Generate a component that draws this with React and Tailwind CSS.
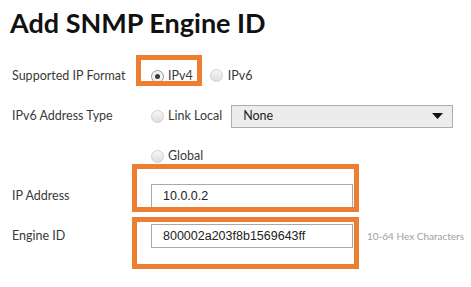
import React from 'react'

const ORANGE = 'border-[#ed7d31]'

function Radio({ checked }) {
  return (
    <span
      className={`relative inline-flex h-[13px] w-[13px] shrink-0 items-center justify-center rounded-full border ${
        checked ? 'border-[#9a9a9a] bg-[#f3f3f3]' : 'border-[#cfcfcf] bg-gradient-to-b from-[#f7f7f7] to-[#dedede]'
      }`}
    >
      {checked && <span className="h-[5px] w-[5px] rounded-full bg-[#3c3c3c]" />}
    </span>
  )
}

function Row({ label, children }) {
  return (
    <div className="flex h-10 items-center">
      <div className="w-[139px] shrink-0 text-[12.5px] text-[#3a3a3a]">{label}</div>
      <div className="flex items-center">{children}</div>
    </div>
  )
}

function TextInput({ value }) {
  return (
    <div className="flex h-6 w-[202px] items-center border border-[#a9a9a9] bg-white pl-[11px] text-[12.5px] text-[#222] font-['Liberation_Sans',Arial,sans-serif]">
      {value}
    </div>
  )
}

export default function App() {
  return (
    <div className="relative h-[287px] w-[471px] overflow-hidden bg-white font-['Lato','DejaVu_Sans',sans-serif]">
      <h1 className="pl-[10px] pt-[9px] text-[27px] font-bold leading-none text-[#111]">Add SNMP Engine ID</h1>

      <div className="mt-[20px] pl-[12px]">
        <Row label="Supported IP Format">
          <Radio checked />
          <span className="ml-1 text-[12.5px] text-[#3a3a3a]">IPv4</span>
          <span className="ml-[17px]"><Radio /></span>
          <span className="ml-[5px] text-[12.5px] text-[#3a3a3a]">IPv6</span>
        </Row>
        <Row label="IPv6 Address Type">
          <Radio />
          <span className="ml-1 text-[12.5px] text-[#3a3a3a]">Link Local</span>
          <div className="ml-[9px] flex h-[23px] w-[222px] items-center justify-between border border-[#adadad] bg-[#ececec] pl-[11px] pr-[9px] text-[12.5px] text-[#222]">
            <span>None</span>
            <svg width="11" height="6" viewBox="0 0 11 6">
              <path d="M0 0h11L5.5 6z" fill="#111" />
            </svg>
          </div>
        </Row>
        <Row label="">
          <Radio />
          <span className="ml-1 text-[12.5px] text-[#3a3a3a]">Global</span>
        </Row>
        <Row label="IP Address">
          <TextInput value="10.0.0.2" />
        </Row>
        <Row label="Engine ID">
          <TextInput value="800002a203f8b1569643ff" />
          <span className="ml-[14px] text-[10px] text-[#a0a0a0]">10-64 Hex Characters</span>
        </Row>
      </div>

      <div className={`pointer-events-none absolute left-[136px] top-[55px] h-[31px] w-[66px] border-[5px] ${ORANGE}`} />
      <div className={`pointer-events-none absolute left-[132px] top-[164px] h-[48px] w-[227px] border-[5px] ${ORANGE}`} />
      <div className={`pointer-events-none absolute left-[132px] top-[217px] h-[52px] w-[227px] border-[5px] ${ORANGE}`} />
    </div>
  )
}
